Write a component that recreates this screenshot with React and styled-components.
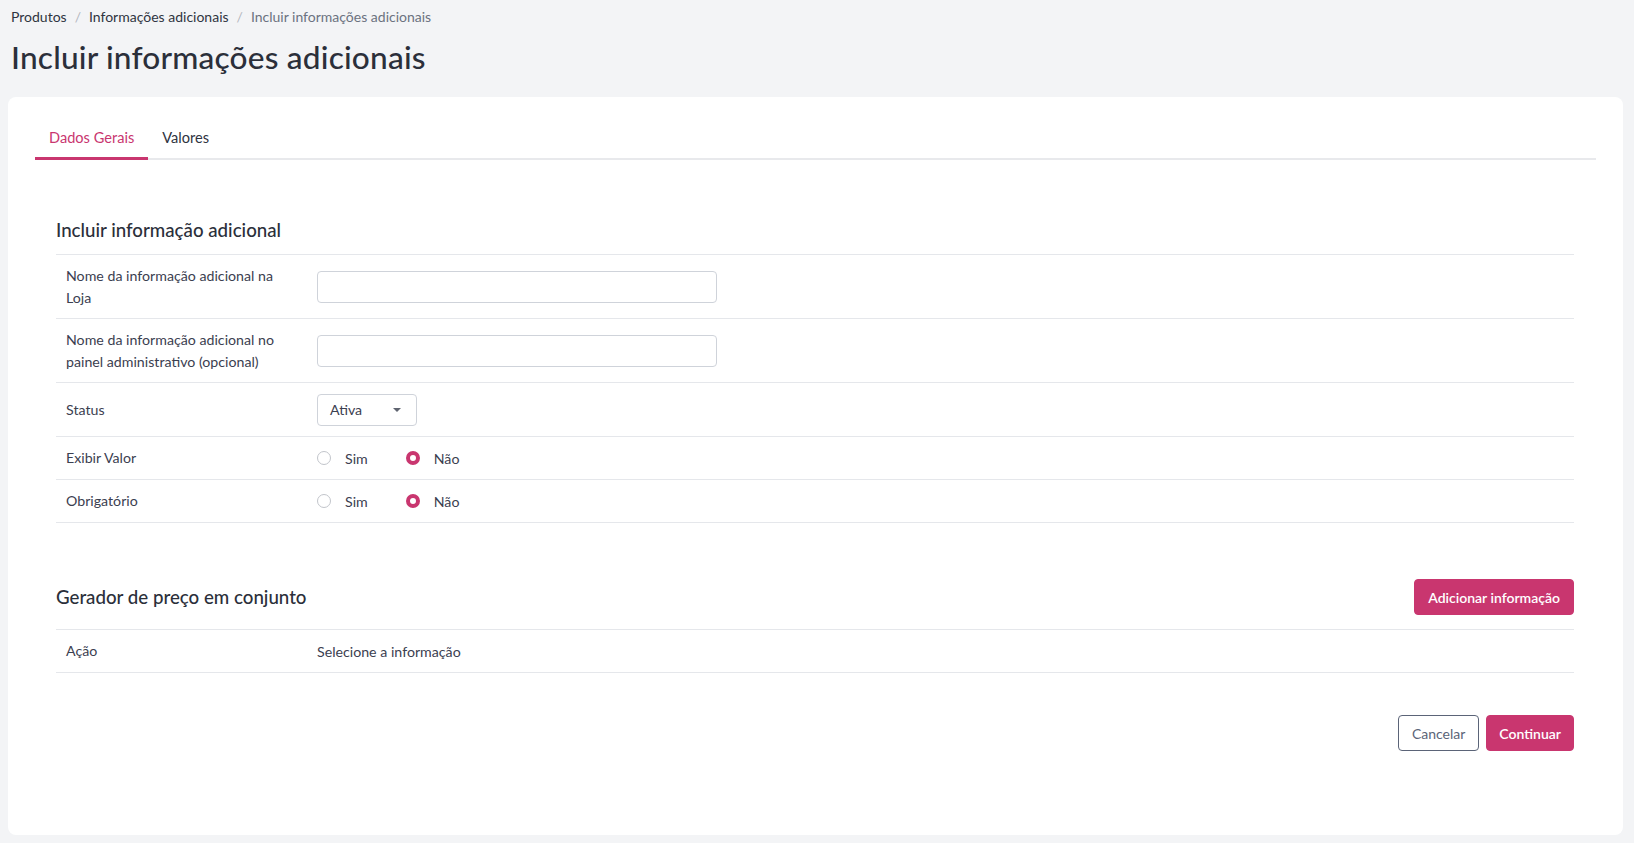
import React from "react";
import styled, { createGlobalStyle } from "styled-components";

const GlobalStyle = createGlobalStyle`
  * { box-sizing: border-box; }
  body {
    margin: 0;
    background: #f3f4f6;
    font-family: "Lato", "Noto Sans", sans-serif;
    color: #343a48;
  }
`;

const PINK = "#c9366f";

const Page = styled.div`
  padding: 7px 11px 9px 8px;
  min-height: 843px;
  display: flex;
  flex-direction: column;
`;

const Breadcrumb = styled.nav`
  display: flex;
  align-items: center;
  gap: 8px;
  padding-left: 3px;
  font-size: 14px;
  line-height: 20px;
`;

const Crumb = styled.span`
  color: ${(p) => (p.$current ? "#6b7280" : "#2f3441")};
`;

const Sep = styled.span`
  color: #b3b7bf;
`;

const Title = styled.h1`
  margin: 12px 0 0 3px;
  font-size: 31.6px;
  line-height: 36px;
  font-weight: 500;
  color: #2b2f3a;
  letter-spacing: 0.2px;
`;

const Card = styled.section`
  margin-top: 22px;
  flex: 1;
  background: #fff;
  border-radius: 8px;
  padding: 20px 27px 84px 27px;
`;

const Tabs = styled.div`
  display: flex;
  border-bottom: 2px solid #e8e9ec;
`;

const Tab = styled.button`
  border: 0;
  background: none;
  font-family: inherit;
  font-size: 14.6px;
  line-height: 18px;
  padding: 12px 14px 10px;
  margin-bottom: -2px;
  cursor: pointer;
  color: ${(p) => (p.$active ? PINK : "#2f3441")};
  border-bottom: 3px solid ${(p) => (p.$active ? PINK : "transparent")};
`;

const Content = styled.div`
  padding: 0 22px 0 21px;
`;

const SectionHeader = styled.div`
  display: flex;
  align-items: center;
  justify-content: space-between;
  margin-top: ${(p) => p.$top}px;
  padding-bottom: ${(p) => p.$pb}px;
  border-bottom: 1px solid #e5e7eb;
`;

const SectionTitle = styled.h2`
  margin: 0;
  font-size: 18.7px;
  line-height: 24px;
  font-weight: 500;
  color: #2b2f3a;
`;

const Row = styled.div`
  display: grid;
  grid-template-columns: 261px 1fr;
  align-items: center;
  min-height: ${(p) => p.$h}px;
  border-bottom: 1px solid #e5e7eb;
`;

const Label = styled.div`
  padding-left: 10px;
  padding-right: 24px;
  font-size: 14.2px;
  line-height: 22px;
  color: #3b4050;
`;

const Cell = styled.div`
  font-size: 14.2px;
  color: #3b4050;
  display: flex;
  align-items: center;
`;

const TextInput = styled.input`
  width: 400px;
  height: 32px;
  border: 1px solid #cfd3da;
  border-radius: 4px;
  font-family: inherit;
  font-size: 14px;
  padding: 0 10px;
  outline: none;
`;

const SelectBox = styled.div`
  width: 100px;
  height: 32px;
  border: 1px solid #cfd3da;
  border-radius: 4px;
  display: flex;
  align-items: center;
  justify-content: space-between;
  padding: 0 15px 0 12px;
  font-size: 14.2px;
  color: #3b4050;
`;

const Caret = styled.span`
  width: 0;
  height: 0;
  border-left: 4px solid transparent;
  border-right: 4px solid transparent;
  border-top: 4px solid #5f6470;
`;

const RadioGroup = styled.div`
  display: flex;
  align-items: center;
  gap: 38px;
`;

const RadioOption = styled.label`
  display: flex;
  align-items: center;
  gap: 14px;
  font-size: 14.2px;
  color: #3b4050;
`;

const RadioDot = styled.span`
  width: 14px;
  height: 14px;
  border-radius: 50%;
  border: ${(p) => (p.$checked ? `4px solid ${PINK}` : "1px solid #c2c5cb")};
  background: #fff;
`;

const Button = styled.button`
  height: 36px;
  padding: 0 ${(p) => p.$px}px;
  border-radius: 4px;
  font-family: inherit;
  font-size: 14px;
  font-weight: ${(p) => (p.$outline ? 400 : 600)};
  cursor: pointer;
  background: ${(p) => (p.$outline ? "#fff" : PINK)};
  color: ${(p) => (p.$outline ? "#5b6478" : "#fff")};
  border: 1px solid ${(p) => (p.$outline ? "#5b6478" : PINK)};
`;

const Footer = styled.div`
  display: flex;
  justify-content: flex-end;
  gap: 7px;
  margin-top: 42px;
`;

function Radio({ checked, children }) {
  return (
    <RadioOption>
      <RadioDot $checked={checked} />
      {children}
    </RadioOption>
  );
}

export default function App() {
  return (
    <>
      <GlobalStyle />
      <Page>
        <Breadcrumb>
          <Crumb>Produtos</Crumb>
          <Sep>/</Sep>
          <Crumb>Informações adicionais</Crumb>
          <Sep>/</Sep>
          <Crumb $current>Incluir informações adicionais</Crumb>
        </Breadcrumb>
        <Title>Incluir informações adicionais</Title>
        <Card>
          <Tabs>
            <Tab $active>Dados Gerais</Tab>
            <Tab>Valores</Tab>
          </Tabs>
          <Content>
            <SectionHeader $top={58} $pb={12}>
              <SectionTitle>Incluir informação adicional</SectionTitle>
            </SectionHeader>
            <Row $h={64}>
              <Label>Nome da informação adicional na Loja</Label>
              <Cell>
                <TextInput />
              </Cell>
            </Row>
            <Row $h={64}>
              <Label>Nome da informação adicional no painel administrativo (opcional)</Label>
              <Cell>
                <TextInput />
              </Cell>
            </Row>
            <Row $h={54}>
              <Label>Status</Label>
              <Cell>
                <SelectBox>
                  Ativa
                  <Caret />
                </SelectBox>
              </Cell>
            </Row>
            <Row $h={43}>
              <Label>Exibir Valor</Label>
              <Cell>
                <RadioGroup>
                  <Radio>Sim</Radio>
                  <Radio checked>Não</Radio>
                </RadioGroup>
              </Cell>
            </Row>
            <Row $h={43}>
              <Label>Obrigatório</Label>
              <Cell>
                <RadioGroup>
                  <Radio>Sim</Radio>
                  <Radio checked>Não</Radio>
                </RadioGroup>
              </Cell>
            </Row>

            <SectionHeader $top={56} $pb={14}>
              <SectionTitle>Gerador de preço em conjunto</SectionTitle>
              <Button $px={13}>Adicionar informação</Button>
            </SectionHeader>
            <Row $h={43}>
              <Label>Ação</Label>
              <Cell>Selecione a informação</Cell>
            </Row>

            <Footer>
              <Button $outline $px={13}>Cancelar</Button>
              <Button $px={12}>Continuar</Button>
            </Footer>
          </Content>
        </Card>
      </Page>
    </>
  );
}
